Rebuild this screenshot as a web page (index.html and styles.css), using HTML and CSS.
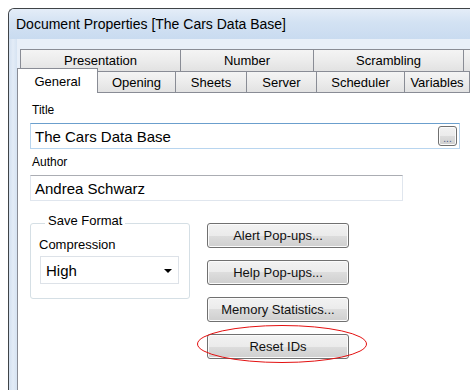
FILE: index.html
```html
<!DOCTYPE html>
<html lang="en">
<head>
  <meta charset="UTF-8" />
  <title>Document Properties</title>
  <link rel="stylesheet" href="styles.css">
</head>
<body>
  <div class="window">
    <div class="titlebar">Document Properties [The Cars Data Base]</div>
    <div class="client">
      <div class="tabrow tabrow-back">
        <div class="tab">Presentation</div>
        <div class="tab">Number</div>
        <div class="tab">Scrambling</div>
        <div class="tab"></div>
      </div>
      <div class="tabrow tabrow-front">
        <div class="tab tab-active">General</div>
        <div class="tab tab-next">Opening</div>
        <div class="tab">Sheets</div>
        <div class="tab">Server</div>
        <div class="tab">Scheduler</div>
        <div class="tab tab-last">Variables</div>
      </div>
      <div class="panel">
        <div class="field-label">Title</div>
        <div class="textbox textbox-title">
          <span class="textbox-value">The Cars Data Base</span>
          <button class="browse">...</button>
        </div>
        <div class="field-label field-label-author">Author</div>
        <div class="textbox textbox-author">
          <span class="textbox-value">Andrea Schwarz</span>
        </div>
        <div class="bottom">
          <div class="group">
            <div class="group-title">Save Format</div>
            <div class="group-label">Compression</div>
            <div class="combo">
              <span>High</span>
              <span class="combo-arrow"></span>
            </div>
          </div>
          <div class="buttons">
            <button class="btn">Alert Pop-ups...</button>
            <button class="btn">Help Pop-ups...</button>
            <button class="btn">Memory Statistics...</button>
            <div class="marked">
              <button class="btn">Reset IDs</button>
              <svg class="ring" width="170" height="38" viewBox="0 0 170 38">
                <ellipse cx="85" cy="19" rx="84.5" ry="18.5" fill="none" stroke="#e31010" stroke-width="1" />
              </svg>
            </div>
          </div>
        </div>
      </div>
    </div>
  </div>
</body>
</html>
```

FILE: styles.css
```css
:root {
  --font-ui: 'Liberation Sans', Arial, sans-serif;
  --frame-border: #3f4347;
  --band-bg: #e8eff8;
  --tab-border: #898c95;
  --btn-border: #707070;
}
* { box-sizing: border-box; }

html, body {
  margin: 0;
  padding: 0;
  width: 100%;
  height: 100%;
  overflow: hidden;
}
body {
  background: #fff;
  font-family: var(--font-ui);
  color: #000;
}

/* window is cut off by the screenshot on the right and bottom */
.window {
  display: flex;
  flex-direction: column;
  margin: 8px 0 0 8px;
  width: 462px;
  height: 382px;
  border-top: 1px solid var(--frame-border);
  border-left: 1px solid var(--frame-border);
  border-radius: 6px 0 0 0;
  background: linear-gradient(90deg, #d3e0f0 0, #e3ecf7 4px, #d6e3f2 8px);
  overflow: hidden;
}
.titlebar {
  flex: none;
  height: 30px;
  line-height: 30px;
  padding-left: 7px;
  font-size: 14px;
  background: linear-gradient(#e4edf8, #d3e2f3 45%, #c9dbf0);
  border-radius: 5px 0 0 0;
}
.client {
  flex: 1;
  display: flex;
  flex-direction: column;
  min-height: 0;
  margin-left: 8px;
  padding-top: 10px;
  background: var(--band-bg);
}

/* tab strip, two rows */
.tabrow {
  display: grid;
  flex: none;
  font-size: 13px;
  line-height: 21px;
  text-align: center;
}
.tabrow-back {
  grid-template-columns: 160px 133px 150px 1fr;
  grid-template-rows: 22px;
  margin-left: 3px;
}
.tabrow-front {
  grid-template-columns: 81px 77px 71px 70px 88px 66px;
  grid-template-rows: 21px;
  align-items: end;
  position: relative;
  z-index: 2;
}
.tab {
  border-top: 1px solid var(--tab-border);
  border-left: 1px solid var(--tab-border);
  background: linear-gradient(#f4f4f4, #ececec 50%, #e2e2e2);
  white-space: nowrap;
  overflow: hidden;
}
.tabrow-back .tab { height: 22px; }
.tabrow-front .tab { height: 21px; }
.tab-last { border-right: 1px solid var(--tab-border); }
.tab-next { border-left: none; }
.tabrow-front .tab-active {
  height: 25px;
  margin-bottom: -1px;
  padding-top: 2px;
  border-right: 1px solid var(--tab-border);
  background: #fff;
}

.panel {
  flex: 1;
  min-height: 0;
  padding: 10px 0 0 12px;
  background: #fff;
  border-top: 1px solid var(--tab-border);
  border-left: 1px solid var(--tab-border);
  overflow: hidden;
}

.field-label {
  padding-left: 2px;
  font-size: 12px;
  line-height: 15px;
  margin-bottom: 5px;
}
.field-label-author { margin-top: 6px; }

.textbox {
  display: flex;
  align-items: center;
  height: 26px;
  padding: 0 2px 0 4px;
  border: 1px solid #e0e6ee;
  border-top-color: #abadb3;
  font-size: 15px;
}
.textbox-value { flex: 1; }
.textbox-title {
  width: 430px;
  border-color: #b8d5ef;
  border-top-color: #6b9fcd;
}
.textbox-author { width: 373px; }

.browse {
  width: 19px;
  height: 20px;
  padding: 6px 0 0;
  border: 1px solid var(--btn-border);
  border-radius: 3px;
  background: linear-gradient(#f2f2f2, #ebebeb 50%, #dddddd 50%, #cfcfcf);
  box-shadow: inset 0 0 0 1px #fbfbfb;
  font-family: var(--font-ui);
  font-size: 10px;
  line-height: 10px;
  color: #4a5a8a;
}

.bottom {
  display: flex;
  align-items: flex-start;
  gap: 17px;
  margin-top: 22px;
}

.group {
  width: 160px;
  padding: 0 8px 14px 8px;
  border: 1px solid #d5dfe5;
  border-radius: 3px;
}
.group-title {
  width: max-content;
  margin: -11px 0 0 6px;
  padding: 0 3px;
  background: #fff;
  font-size: 13px;
  line-height: 15px;
}
.group-label {
  margin-top: 9px;
  font-size: 13px;
  line-height: 15px;
}
.combo {
  display: flex;
  align-items: center;
  justify-content: space-between;
  width: 139px;
  height: 28px;
  margin: 4px 0 0 1px;
  padding: 0 6px 0 5px;
  border: 1px solid #dde2e8;
  font-size: 15px;
}
.combo-arrow {
  width: 0;
  height: 0;
  margin-top: 2px;
  border-left: 4px solid transparent;
  border-right: 4px solid transparent;
  border-top: 4px solid #000;
}

.buttons {
  display: flex;
  flex-direction: column;
  gap: 12px;
  width: 142px;
}
.btn {
  width: 142px;
  height: 25px;
  padding: 0;
  border: 1px solid var(--btn-border);
  border-radius: 3px;
  background: linear-gradient(#f2f2f2, #ebebeb 50%, #dddddd 50%, #cfcfcf);
  box-shadow: inset 0 0 0 1px #fbfbfb;
  font-family: var(--font-ui);
  font-size: 13px;
  color: #111;
}
.marked { position: relative; }
.ring {
  position: absolute;
  left: -10px;
  top: -9px;
  pointer-events: none;
}
```
